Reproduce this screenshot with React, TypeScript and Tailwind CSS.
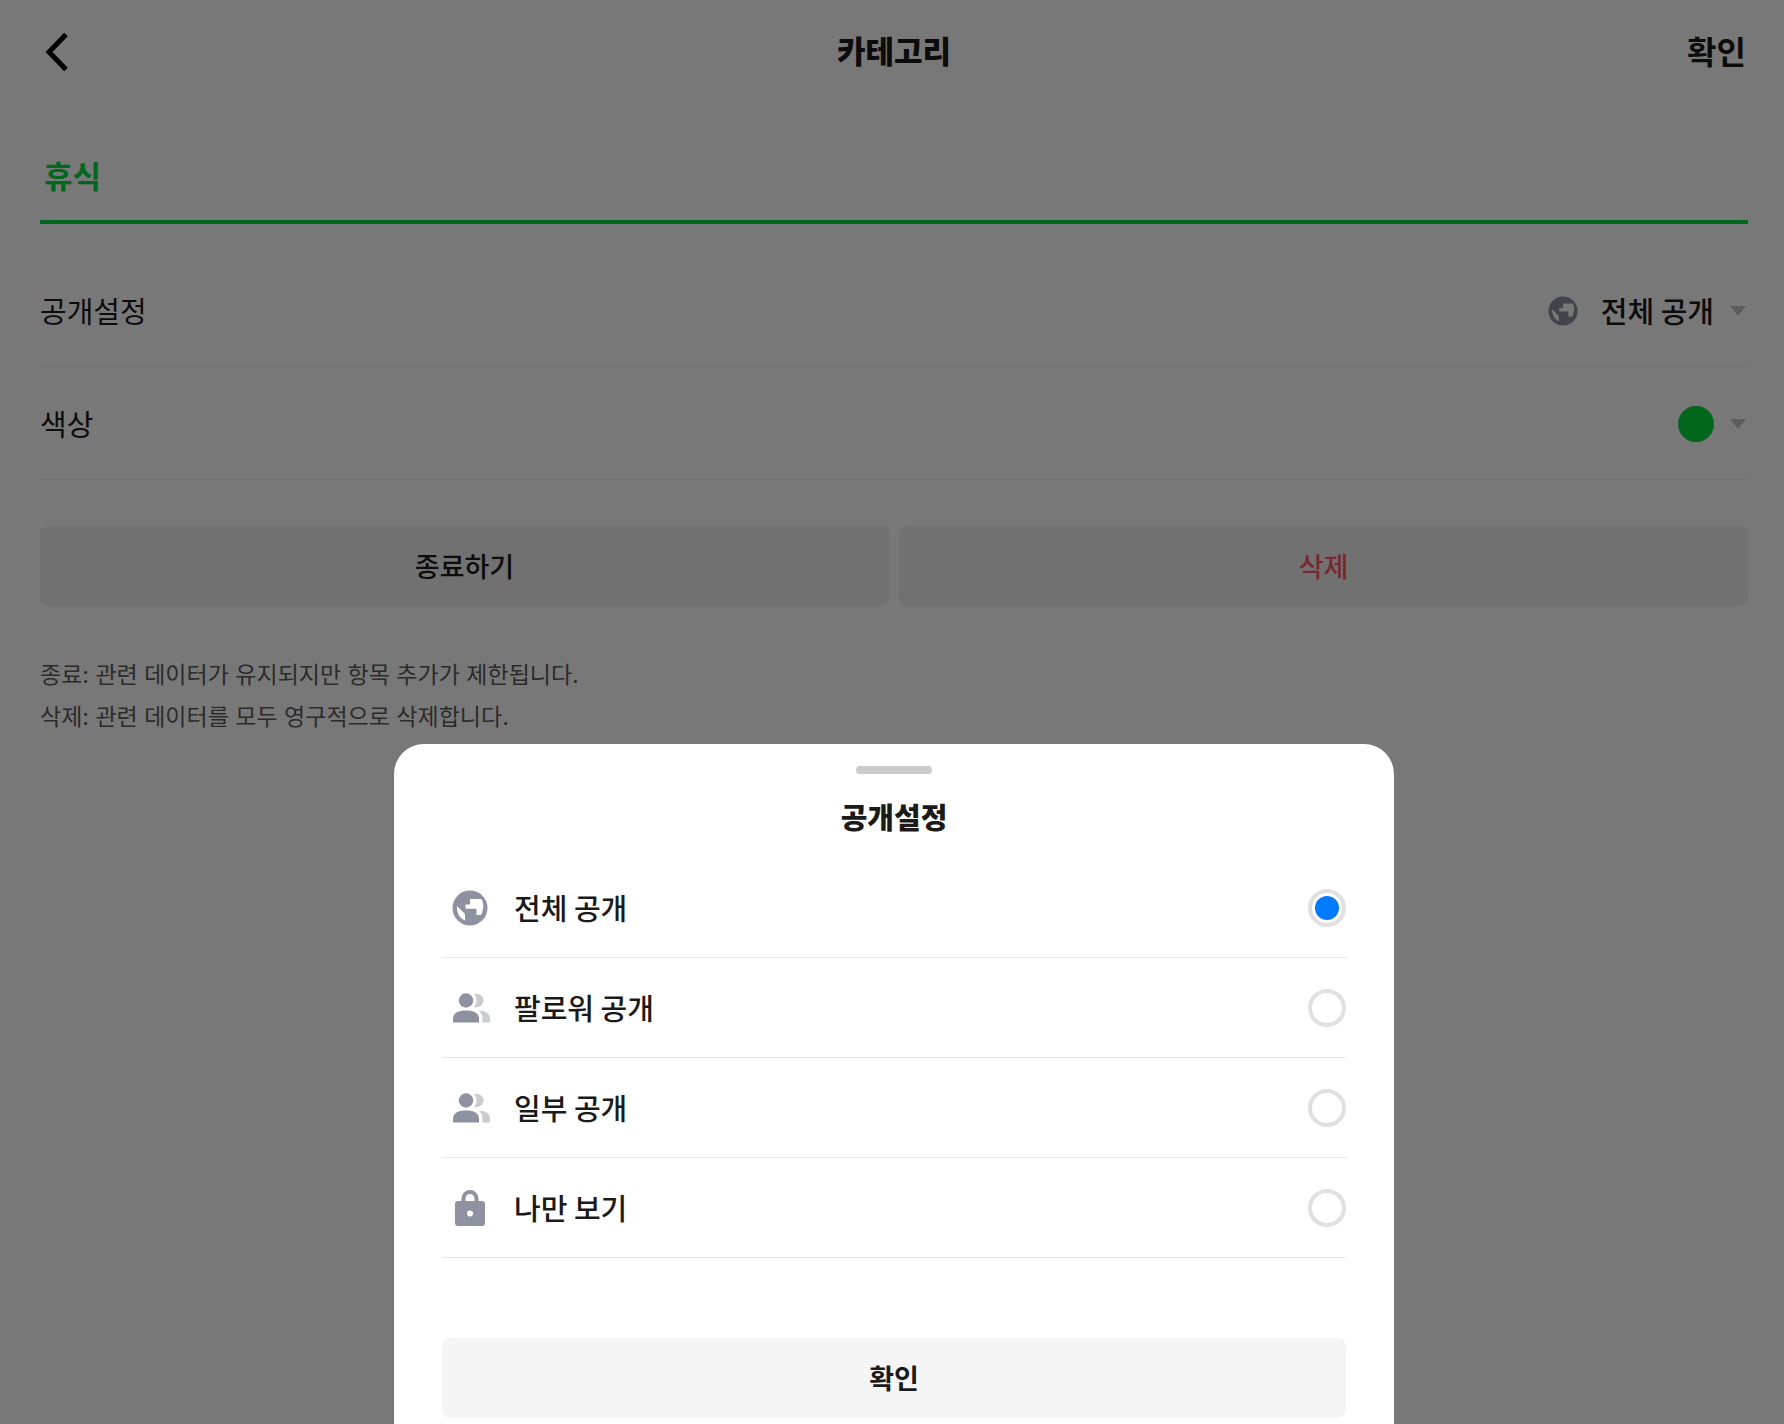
import { useState } from "react";

type Visibility = "all" | "followers" | "partial" | "me";

function GlobeIcon({ className }: { className?: string }) {
  return (
    <svg viewBox="0 0 36 36" className={className} aria-hidden="true">
      <circle cx="18" cy="18" r="17.5" fill="#8e919f" />
      <path
        fill="#fff"
        d="M18 9h11.500c1.200 2.500 1.800 4.500 1.800 6.500 0 3.500-.8 6.500-2.300 9.500h-4.500v-5.500c0-.5-.4-.8-.8-.8H13.500v-4.200h3.700c.5 0 .8-.4.8-.8z"
      />
      <path fill="#fff" d="M5 16l8 8v6.500C8 28.500 4.500 23 5 16z" />
    </svg>
  );
}

function PeopleIcon({ className }: { className?: string }) {
  return (
    <svg viewBox="0 0 38 30" className={className} aria-hidden="true">
      <circle cx="13" cy="7.500" r="7.200" fill="#8e919f" />
      <path fill="#8e919f" d="M0 29.500v-3.500c0-6 5-8.500 13-8.500s13 2.500 13 8.500v3.500z" />
      <path fill="#cbccd2" d="M21 .8c5-.8 9.500 2 9.500 6.700s-4.500 7.500-9.500 6.700c3.400-4 3.400-9.400 0-13.400z" />
      <path fill="#cbccd2" d="M25.500 17.600c8 .4 11.500 3.400 11.500 8.400v3.500h-7.500v-3.500c0-3.500-1-6-4-8.400z" />
    </svg>
  );
}

function LockIcon({ className }: { className?: string }) {
  return (
    <svg viewBox="0 0 30 38" className={className} aria-hidden="true">
      <path d="M8.500 13V9.500a6.500 6.500 0 0 1 13 0V13" fill="none" stroke="#8e919f" strokeWidth="4" />
      <rect y="12" width="30" height="25" rx="3" fill="#8e919f" />
      <circle cx="15" cy="24.500" r="3" fill="#fff" />
    </svg>
  );
}

function Caret() {
  return (
    <svg viewBox="0 0 16 10" className="w-4 h-[10px]" aria-hidden="true">
      <path d="M0 0h16L8 10z" fill="#c4c4c4" />
    </svg>
  );
}

const options: { value: Visibility; label: string; icon: React.ReactNode }[] = [
  { value: "all", label: "전체 공개", icon: <GlobeIcon className="w-9 h-9" /> },
  { value: "followers", label: "팔로워 공개", icon: <PeopleIcon className="w-[38px] h-[30px] ml-px" /> },
  { value: "partial", label: "일부 공개", icon: <PeopleIcon className="w-[38px] h-[30px] ml-px" /> },
  { value: "me", label: "나만 보기", icon: <LockIcon className="w-[30px] h-[38px] ml-[3px]" /> },
];

export default function App() {
  const [visibility, setVisibility] = useState<Visibility>("all");
  const [name, setName] = useState("휴식");
  const selected = options.find((o) => o.value === visibility);

  return (
    <div className="relative min-h-screen overflow-hidden bg-white text-[#1a1a1a] font-['Noto_Sans_CJK_KR',sans-serif]">
      <div className="pl-10 pr-9">
        <header className="grid grid-cols-3 items-center h-[104px]">
          <button type="button" aria-label="뒤로" className="justify-self-start pl-1">
            <svg viewBox="0 0 28 40" className="w-7 h-10" aria-hidden="true">
              <path d="M22 2.500L5 20l17 17.500" fill="none" stroke="#000" strokeWidth="5" />
            </svg>
          </button>
          <h1 className="justify-self-center pb-1 text-[31px] font-black">카테고리</h1>
          <button type="button" className="justify-self-end pb-1 pr-[2px] text-[32px] font-bold">
            확인
          </button>
        </header>

        <input
          type="text"
          aria-label="카테고리 이름"
          value={name}
          onChange={(e) => setName(e.target.value)}
          className="block w-full h-[120px] px-1 pt-6 border-b-4 border-[#00dc3c] text-[31px] font-bold text-[#00dc3c] bg-transparent outline-none"
        />

        <div className="mt-[30px] text-[29px]">
          <div className="flex items-center justify-between h-[113px] pt-[2px] border-b border-[#eaeaea]">
            <span>공개설정</span>
            <button type="button" className="flex items-center font-medium">
              <GlobeIcon className="w-[30px] h-[30px] mr-[23px]" />
              {selected?.label}
              <span className="ml-4 mr-[2px]">
                <Caret />
              </span>
            </button>
          </div>
          <div className="flex items-center justify-between h-[113px] pt-[2px] border-b border-[#eaeaea]">
            <span>색상</span>
            <button type="button" aria-label="색상 선택" className="flex items-center gap-4 pr-[2px]">
              <span className="w-9 h-9 rounded-full bg-[#00dc3c]" />
              <Caret />
            </button>
          </div>
        </div>

        <div className="grid grid-cols-2 gap-[10px] mt-[46px] text-[27px] font-medium">
          <button type="button" className="h-20 rounded-lg bg-[#f1f1f1]">
            종료하기
          </button>
          <button type="button" className="h-20 rounded-lg bg-[#f1f1f1] text-[#ff5564]">
            삭제
          </button>
        </div>

        <div className="mt-12 text-[23px] leading-[42px] text-[#5c5c5c] font-[Inter,'Noto_Sans_CJK_KR',sans-serif]">
          <p>종료: 관련 데이터가 유지되지만 항목 추가가 제한됩니다.</p>
          <p>삭제: 관련 데이터를 모두 영구적으로 삭제합니다.</p>
        </div>
      </div>

      <div className="absolute inset-0 flex items-end justify-center pl-1 bg-black/53">
        <section
          role="dialog"
          aria-label="공개설정"
          className="flex flex-col w-full max-w-[1000px] px-12 pt-[22px] pb-[6px] rounded-t-[30px] bg-white"
        >
          <div className="self-center w-[76px] h-2 rounded-full bg-[#cbcbcb]" />
          <h2 className="my-5 text-center text-[29px] leading-[44px] font-black">공개설정</h2>

          {options.map((option) => (
            <label
              key={option.value}
              className="flex items-center h-[100px] pl-[10px] border-b border-[#e8e8e8] text-[29px] font-medium"
            >
              <span className="w-[62px]">{option.icon}</span>
              <span className="flex-1">{option.label}</span>
              <input
                type="radio"
                name="visibility"
                value={option.value}
                checked={visibility === option.value}
                onChange={() => setVisibility(option.value)}
                className="appearance-none grid place-items-center w-[38px] h-[38px] rounded-full border-4 border-[#e0e0e0] checked:before:content-[''] checked:before:w-6 checked:before:h-6 checked:before:rounded-full checked:before:bg-[#007aff]"
              />
            </label>
          ))}

          <button type="button" className="h-20 mt-20 rounded-lg bg-[#f5f5f5] text-[27px] font-bold">
            확인
          </button>
        </section>
      </div>
    </div>
  );
}
